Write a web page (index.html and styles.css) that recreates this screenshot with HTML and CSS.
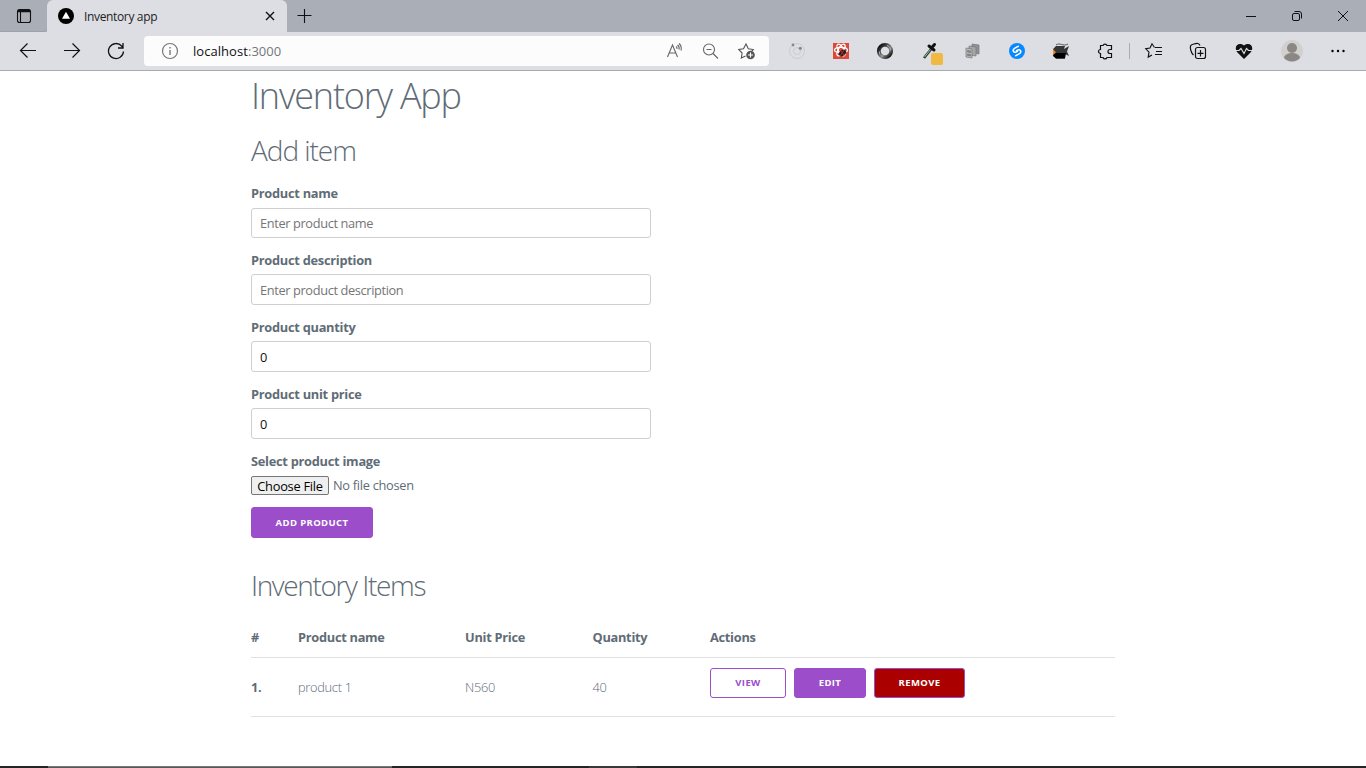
FILE: index.html
```html
<!DOCTYPE html>
<html lang="en">
<head>
<meta charset="utf-8">
<title>Inventory app</title>
<link rel="stylesheet" href="styles.css">
</head>
<body>
<div class="window">
  <header class="tabstrip">
    <div class="tab-actions"><svg width="16" height="16" viewBox="0 0 16 16" fill="none" stroke="#111" stroke-width="1.1"><rect x="1.500" y="1.500" width="13" height="13" rx="2"/><path d="M2 3h12" stroke-width="2.500"/><path d="M4.500 4v10"/></svg></div>
    <div class="tab">
      <svg width="16" height="16" viewBox="0 0 16 16"><circle cx="8" cy="8" r="8"/><path d="M8 3.800l4 7H4z" fill="#fff"/></svg>
      <span class="tab-title">Inventory app</span>
      <svg width="10" height="10" viewBox="0 0 10 10" stroke="#111" stroke-width="1.400"><path d="M1 1l8 8M9 1L1 9"/></svg>
    </div>
    <svg class="new-tab" width="16" height="16" viewBox="0 0 16 16" stroke="#111" stroke-width="1.100"><path d="M7.500 1v14M.5 7.500h14"/></svg>
    <div class="window-controls">
      <svg width="12" height="12" viewBox="0 0 12 12" stroke="#111"><path d="M1 6.500h10"/></svg>
      <svg width="12" height="12" viewBox="0 0 12 12" stroke="#111" fill="none"><rect x="1.500" y="3.500" width="7" height="7" rx="1.500"/><path d="M3.500 1.500H8a2.500 2.500 0 0 1 2.500 2.500v4.500"/></svg>
      <svg width="12" height="12" viewBox="0 0 12 12" stroke="#111"><path d="M1 1l10 10M11 1L1 11"/></svg>
    </div>
  </header>
  <nav class="toolbar">
    <div class="nav-buttons">
      <svg width="18" height="18" viewBox="0 0 18 18" fill="none" stroke="#111" stroke-width="1.200"><path d="M17 8.500H1.500M8.500 1.500l-7 7 7 7"/></svg>
      <svg width="18" height="18" viewBox="0 0 18 18" fill="none" stroke="#111" stroke-width="1.200"><path d="M1 8.500h15.500M9.500 1.500l7 7-7 7"/></svg>
      <svg width="18" height="18" viewBox="0 0 18 18" fill="none" stroke="#111" stroke-width="1.300"><path d="M16.500 9.500A7.500 7.500 0 1 1 14.600 4L16 5.500M16 1v5h-5"/></svg>
    </div>
    <div class="address">
      <svg width="18" height="18" viewBox="0 0 18 18" fill="none" stroke="#777" stroke-width="1.200"><circle cx="9" cy="9" r="7.500"/><path d="M9 8v5M9 5v1.500" stroke-width="1.400"/></svg>
      <span class="url">localhost<span class="port">:3000</span></span>
      <div class="address-actions">
        <svg width="18" height="18" viewBox="0 0 18 18" fill="none" stroke="#666" stroke-width="1.100"><path d="M1.500 15L6.500 3l5 12M3.300 11h6.400M10 4.500c1 .7 1.200 1.500 1 2.500M11.500 3c1.500 1.200 2 2.800 1.500 4.500M13 1.500c2.200 2 2.800 4 2 7"/></svg>
        <svg width="18" height="18" viewBox="0 0 18 18" fill="none" stroke="#666" stroke-width="1.100"><circle cx="7" cy="7.500" r="5.500"/><path d="M11 11.500l5 5M4.500 7.500h5"/></svg>
        <svg width="18" height="18" viewBox="0 0 18 18" fill="none" stroke="#555" stroke-width="1.100"><path d="M7.500 14l-4.200 2 .8-5L.7 7.500l4.800-.8L8 2l2.300 4.700 5 .8-1.500 1.500"/><circle cx="12.500" cy="13" r="4.300" fill="#555" stroke="none"/><path d="M12.500 10.500v5M10 13h5" stroke="#fff"/></svg>
      </div>
    </div>
    <div class="extensions">
      <svg width="20" height="20" viewBox="0 0 20 20" fill="none" stroke="#cbccd0"><circle cx="10" cy="10" r="7.500"/><circle cx="10" cy="10" r="3.500"/><circle cx="6" cy="4" r="1.400" fill="#888" stroke="none"/><circle cx="13.300" cy="7.300" r="1.600" fill="#888" stroke="none"/></svg>
      <svg width="20" height="20" viewBox="0 0 20 20" fill="none"><path d="M2 2h16v16H2z" fill="#dc493a"/><g stroke="#fff" stroke-width="1.300"><ellipse cx="10" cy="9" rx="6.500" ry="2.700"/><ellipse cx="10" cy="9" rx="6.500" ry="2.700" transform="rotate(60 10 9)"/><ellipse cx="10" cy="9" rx="6.500" ry="2.700" transform="rotate(120 10 9)"/></g><ellipse cx="11.500" cy="12" rx="4" ry="2.700" transform="rotate(-35 11.500 12)" fill="#301b1b"/><path d="M10 10l4 5M13 9l-4 6" stroke="#dc493a" stroke-width=".6"/></svg>
      <svg width="20" height="20" viewBox="0 0 20 20" fill="none"><defs><linearGradient id="ring" x1="0" y1="0" x2="1" y2="1"><stop stop-color="#000"/><stop offset=".4" stop-color="#555"/><stop offset=".6" stop-color="#888"/><stop offset="1" stop-color="#000"/></linearGradient></defs><circle cx="10" cy="10" r="6.200" stroke="url(#ring)" stroke-width="3.800"/><path d="M12 4.500c3 .7 4 3 3.500 5M8 15.500c-3-.7-4-3-3.500-5" stroke="#aaa" stroke-width="1"/></svg>
      <svg width="28" height="28" viewBox="0 0 28 28"><path d="M9 21l8-10" stroke="#263e30" stroke-width="2.600"/><path d="M9.500 20l6-7.500" stroke="#9bbca6"/><path d="M14 9l5 4M16.500 11l3-3.500" stroke="#111" stroke-width="3" stroke-linecap="round"/><rect x="16" y="16" width="12" height="12" rx="2" fill="#efb944"/></svg>
      <svg width="20" height="20" viewBox="0 0 20 20" stroke="#777" stroke-width=".7"><path d="M9 3l7 1v9l-7-1z" fill="#909192"/><path d="M6 5l7 1v9l-7-1z" fill="#a5a6a7"/><path d="M3 7l6 1v9l-6-1z" fill="#bbb"/><path d="M4.500 9.500l3 .5v1.500l-3-.5zM4.500 13l3 .5V15l-3-.5z" fill="#888"/></svg>
      <svg width="20" height="20" viewBox="0 0 20 20" fill="none"><circle cx="10" cy="10" r="8" fill="#0788ff"/><path d="M11.800 5L7.500 7.300C5 9 6.500 12 9 11l2-1M8.200 15l4.300-2.300C15 11 13.500 8 11 9L9 10" stroke="#fff" stroke-width="1.500"/></svg>
      <svg width="20" height="20" viewBox="0 0 20 20"><path d="M5 5h9l-1 3 5-3-2 5.500 2 4.500-4-2v4.500H5L2 14V8z" fill="#363636"/><path d="M3 12h12l-1 5.500H5L2 15z" fill="#000"/><path d="M2 8l3 3.500L2 14z" fill="#f28a22"/><path d="M5 4c4-3 7 2 12-1" fill="none" stroke="#555"/></svg>
      <svg width="20" height="20" viewBox="0 0 20 20" fill="none" stroke="#111" stroke-width="1.200"><path d="M5.500 4.500H8a2.100 2.100 0 0 1 4 0h4.500v4H15a1.900 1.900 0 0 0 0 4h1.500v4H12a2.100 2.100 0 0 1-4 0H5.500v-4a2 2 0 0 1 0-4z"/></svg>
      <span class="divider"></span>
      <svg width="20" height="20" viewBox="0 0 20 20" fill="none" stroke="#111" stroke-width="1.100"><path d="M10.500 6.500L8 2.800 6 7l-4.300.7 3.300 3.400-.8 5L8 14M11 6.500h7M12 10.500h6M11 13.500h7"/></svg>
      <svg width="20" height="20" viewBox="0 0 20 20" fill="none" stroke="#111" stroke-width="1.200"><path d="M5.500 14C3 12 2 7 2.500 5c.4-1.500 6-3 7.500-2.500 1 .3 1.500 1 2 2"/><rect x="7.500" y="6.500" width="10" height="11" rx="2"/><path d="M12.500 9v6.500M9.500 12.300h6"/></svg>
      <svg width="20" height="20" viewBox="0 0 20 20"><path d="M10 18L3 11C-.5 6 4 .500 10 4.500 16 .500 20.500 6 17 11z" fill="#111"/><path d="M1 9.500h4l2-2 3 5 2.500-5 2 2H19" stroke="#dddee3" stroke-width="1.100" fill="none"/></svg>
      <svg width="22" height="22" viewBox="0 0 22 22"><circle cx="11" cy="11" r="11" fill="#d2d0cd"/><circle cx="11" cy="8" r="5" fill="#8b8784"/><path d="M3 18a8 5 0 0 1 16 0 11 11 0 0 1-16 0" fill="#8b8784"/></svg>
      <svg width="20" height="20" viewBox="0 0 20 20"><circle cx="4.500" cy="10" r="1.200"/><circle cx="10" cy="10" r="1.200"/><circle cx="15.500" cy="10" r="1.200"/></svg>
    </div>
  </nav>
  <main class="page">
    <h1>Inventory App</h1>
    <h2 class="add-heading">Add item</h2>
    <form class="product-form">
      <div class="field first"><label for="name">Product name</label><input id="name" class="input" placeholder="Enter product name"></div>
      <div class="field"><label for="description">Product description</label><input id="description" class="input" placeholder="Enter product description"></div>
      <div class="field"><label for="quantity">Product quantity</label><input id="quantity" class="input" value="0"></div>
      <div class="field"><label for="price">Product unit price</label><input id="price" class="input" value="0"></div>
      <label>Select product image</label>
      <div class="file-row"><button class="file-button" type="button">Choose File</button><span>No file chosen</span></div>
      <button class="button add-button" type="button">ADD PRODUCT</button>
    </form>
    <h2 class="items-heading">Inventory Items</h2>
    <section class="items">
      <div class="row head"><span>#</span><span>Product name</span><span>Unit Price</span><span>Quantity</span><span>Actions</span></div>
      <div class="row item"><b>1.</b><span>product 1</span><span>N560</span><span>40</span>
        <div class="actions"><button class="button view">VIEW</button><button class="button edit">EDIT</button><button class="button remove">REMOVE</button></div>
      </div>
    </section>
  </main>
  <footer class="taskbar"><span class="task-active"></span><span class="task-hint"></span></footer>
</div>
</body>
</html>
```
FILE: styles.css
```css
* { box-sizing: border-box; }
body { margin: 0; font-family: "Open Sans", "Noto Sans", sans-serif; background: #fff; }
svg { display: block; flex: none; }
.window { height: 768px; display: flex; flex-direction: column; overflow: hidden; }
.tabstrip { height: 32px; background: #aaaeb6; display: flex; align-items: center; flex: none; }
.tab-actions { width: 47px; height: 32px; padding: 8px 0 0 16px; border-bottom: 1px solid #9da1a9; border-radius: 0 0 4px 0; }
.tab { width: 240px; height: 32px; background: #dddee3; border-radius: 6px 6px 0 0; display: flex; align-items: center; padding: 0 12px 0 11px; }
.tab-title { flex: 1; margin-left: 10px; font-size: 12px; letter-spacing: -.35px; color: #222; }
.new-tab { margin-left: 10px; }
.window-controls { margin-left: auto; display: flex; gap: 34px; padding-right: 17px; }
.toolbar { height: 39px; background: #dddee3; border-bottom: 1px solid #a9aaaf; display: flex; align-items: center; flex: none; }
.nav-buttons { width: 144px; padding-left: 19px; display: flex; gap: 26px; }
.address { width: 625px; height: 30px; background: #fcfcfd; border-radius: 4px; display: flex; align-items: center; padding: 0 13px 0 17px; }
.url { margin-left: 14px; font-size: 13px; letter-spacing: .05px; color: #111; }
.port { color: #777; }
.address-actions { margin-left: auto; display: flex; gap: 18px; }
.extensions { flex: 1; display: grid; grid-template-columns: repeat(8, 44px) 5px 44px 44px 48px 48px 44px; justify-items: center; align-items: center; padding-left: 6px; }
.divider { width: 1px; height: 16px; background: #aaacb0; }
.page { width: 864px; margin-left: 251px; flex: 1; color: #606c76; }
h1, h2 { margin: 0; font-weight: 300; white-space: nowrap; }
h1 { height: 50px; font-size: 36px; line-height: 50px; letter-spacing: -1.2px; }
h2 { height: 40px; font-size: 28px; line-height: 40px; letter-spacing: -1.050px; }
.add-heading { margin-top: 9px; }
.product-form { width: 400px; margin-top: 12px; }
label { display: block; font-size: 12.8px; font-weight: 700; height: 22px; line-height: 22px; letter-spacing: -.26px; }
.field { height: 67px; display: flex; flex-direction: column; gap: 3px; }
.field.first { gap: 4px; }
.input { display: block; width: 400px; height: 31px; border: 1px solid #cfcfcf; border-radius: 3px; padding: 0 8px; font: 400 12.8px "Open Sans", sans-serif; letter-spacing: -.37px; color: #111; outline: 0; }
.first .input { height: 30px; }
.input::placeholder { color: #757575; }
.file-row { display: flex; align-items: center; gap: 4px; margin-top: 4px; height: 19px; font-size: 12.8px; letter-spacing: -.28px; }
.file-row span { margin-top: -2px; }
.file-button { width: 78px; height: 19px; padding: 0; border: 1px solid #767676; border-radius: 2px; background: #efefef; color: #000; font: 400 12.8px/16px "Open Sans", sans-serif; letter-spacing: -.25px; }
.button { height: 30px; border: 1px solid #9b4dca; border-radius: 3px; background: #9b4dca; color: #fff; padding: 0; font: 700 9.5px/28px "Open Sans", sans-serif; letter-spacing: .38px; }
.add-button { width: 122px; height: 31px; display: block; margin-top: 12px; }
.items-heading { margin-top: 27px; letter-spacing: -1.380px; }
.row { display: grid; grid-template-columns: 47px 167px 127.500px 117.500px 1fr; align-items: center; border-bottom: 1px solid #e1e1e1; font-size: 12.8px; letter-spacing: -.28px; }
.items { margin-top: 12px; }
.head { height: 40px; padding-bottom: 1px; height: 41px; font-weight: 700; }
.item { height: 59px; font-weight: 300; }
.item b { font-weight: 700; }
.actions { display: flex; gap: 8px; margin-bottom: 8px; }
.view { width: 76px; background: #fff; color: #9b4dca; }
.edit { width: 72px; }
.remove { width: 91px; background: #a00; }
.taskbar { height: 2px; background: #242427; display: flex; flex: none; }
.task-active { width: 344px; margin-left: 48px; background: #58585a; border-top: 1px solid #777; }
.task-hint { width: 48px; margin-left: 197px; background: #39393b; }
```
